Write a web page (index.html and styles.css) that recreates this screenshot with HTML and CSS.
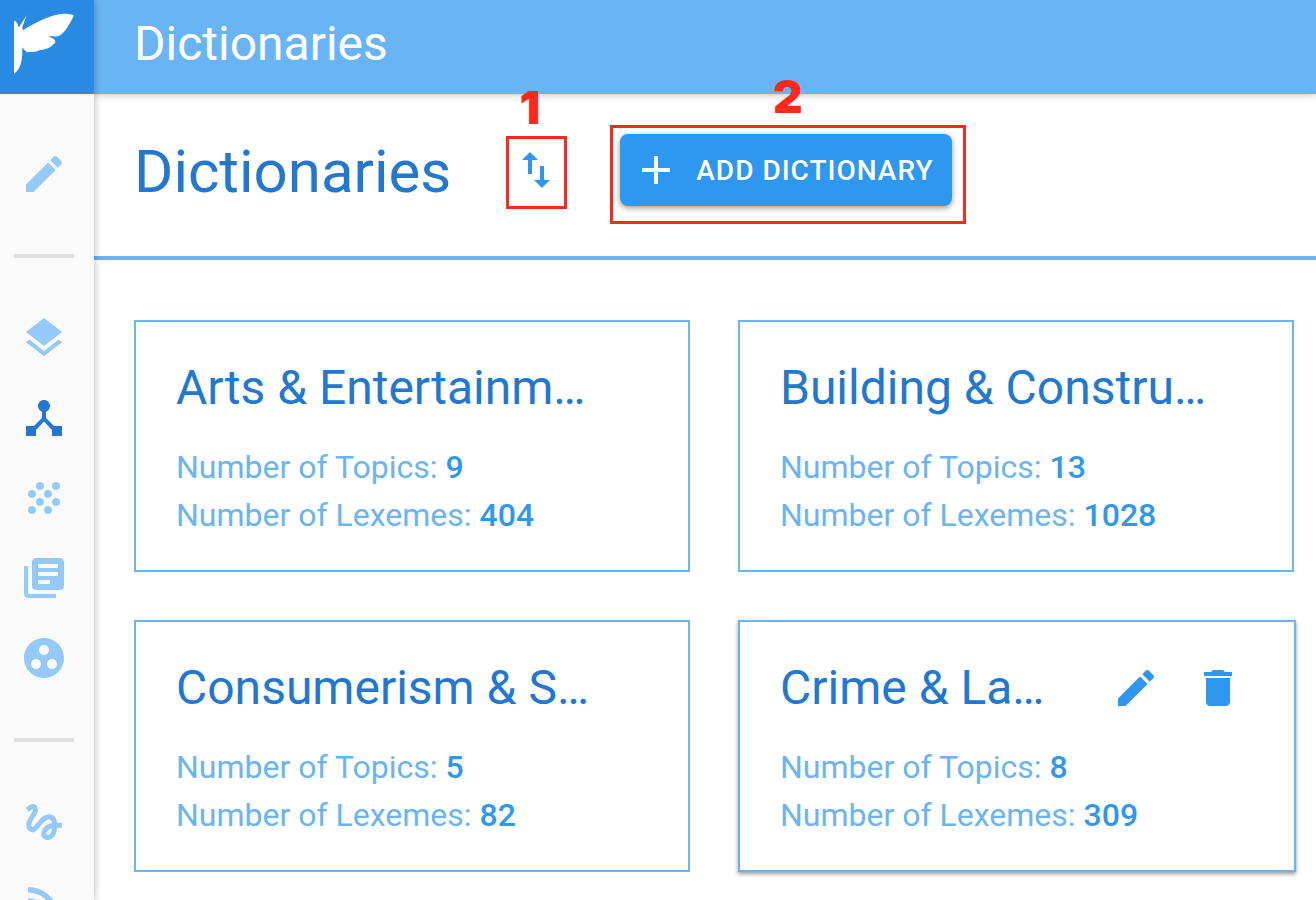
FILE: index.html
```html
<!DOCTYPE html>
<html lang="en">
<head>
    <meta charset="UTF-8">
    <title>Dictionaries</title>
    <link rel="stylesheet" href="styles.css">
</head>
<body>
    <div class="app">
        <aside class="sidebar">
            <a class="logo" href="#" aria-label="Home">
                <svg viewBox="0 0 94 94"><path d="M14 20.500C16.500 21.500 18 24 18.500 27L19.500 26.500L26.700 15L22 28L23.300 30C36 22.500 52 14 64 13.800C70 13.800 74 14.800 73.800 16C70 23 65 33 59 36C56 37 52 36 48 36.300C51 37.800 54.500 38 55.500 42C52 47 46 50 39 50.200C37.500 52 32 52 27 52.200C25 50.500 23.500 49 22.300 47.300C22.500 58 22 68 14 74Z"/></svg>
            </a>
            <nav class="menu">
                <a class="menu-item" href="#" aria-label="Edit">
                    <svg viewBox="0 0 24 24"><path d="M3 17.250V21h3.750L17.810 9.940l-3.750-3.750L3 17.250zM20.710 7.040c.39-.39.39-1.020 0-1.410l-2.340-2.340c-.39-.39-1.020-.39-1.410 0l-1.830 1.830 3.750 3.750 1.830-1.830z"/></svg>
                </a>
                <hr>
                <div class="menu-group">
                    <a class="menu-item" href="#" aria-label="Layers">
                        <svg viewBox="0 0 24 24"><path d="M11.990 18.540l-7.370-5.730L3 14.070l9 7 9-7-1.630-1.270-7.380 5.740zM12 16l7.360-5.730L21 9l-9-7-9 7 1.630 1.270L12 16z"/></svg>
                    </a>
                    <a class="menu-item active" href="#" aria-label="Dictionaries">
                        <svg viewBox="0 0 24 24"><path d="M17 16l-4-4V8.820C14.160 8.400 15 7.300 15 6c0-1.660-1.340-3-3-3S9 4.340 9 6c0 1.300.84 2.400 2 2.820V12l-4 4H3v5h5v-3.050l4-4.200 4 4.200V21h5v-5h-4z"/></svg>
                    </a>
                    <a class="menu-item" href="#" aria-label="Grain">
                        <svg viewBox="0 0 24 24"><path d="M10 12c-1.100 0-2 .9-2 2s.9 2 2 2 2-.9 2-2-.9-2-2-2zM6 8c-1.100 0-2 .9-2 2s.9 2 2 2 2-.9 2-2-.9-2-2-2zm0 8c-1.100 0-2 .9-2 2s.9 2 2 2 2-.9 2-2-.9-2-2-2zm12-8c1.100 0 2-.9 2-2s-.9-2-2-2-2 .9-2 2 .9 2 2 2zm-4 8c-1.100 0-2 .9-2 2s.9 2 2 2 2-.9 2-2-.9-2-2-2zm4-4c-1.100 0-2 .9-2 2s.9 2 2 2 2-.9 2-2-.9-2-2-2zm-4-4c-1.100 0-2 .9-2 2s.9 2 2 2 2-.9 2-2-.9-2-2-2zm-4-4c-1.100 0-2 .9-2 2s.9 2 2 2 2-.9 2-2-.9-2-2-2z"/></svg>
                    </a>
                    <a class="menu-item" href="#" aria-label="Library">
                        <svg viewBox="0 0 24 24"><path d="M4 6H2v14c0 1.100.9 2 2 2h14v-2H4V6zm16-4H8c-1.100 0-2 .9-2 2v12c0 1.100.9 2 2 2h12c1.100 0 2-.9 2-2V4c0-1.100-.9-2-2-2zm-1 9H9V9h10v2zm-4 4H9v-2h6v2zm4-8H9V5h10v2z"/></svg>
                    </a>
                    <a class="menu-item" href="#" aria-label="Groups">
                        <svg viewBox="0 0 24 24"><path d="M12 2C6.480 2 2 6.480 2 12s4.480 10 10 10 10-4.480 10-10S17.520 2 12 2zM8 17.500c-1.380 0-2.500-1.120-2.500-2.500s1.120-2.500 2.500-2.500 2.500 1.120 2.500 2.500-1.120 2.500-2.500 2.500zM9.500 8c0-1.380 1.120-2.500 2.500-2.500s2.500 1.120 2.500 2.500-1.120 2.500-2.500 2.500S9.500 9.380 9.500 8zm6.500 9.500c-1.380 0-2.500-1.120-2.500-2.500s1.120-2.500 2.500-2.500 2.500 1.120 2.500 2.500-1.120 2.500-2.500 2.500z"/></svg>
                    </a>
                </div>
                <hr>
                <div class="menu-group">
                    <a class="menu-item" href="#" aria-label="Gesture">
                        <svg viewBox="0 0 24 24"><path d="M4.590 6.890c.7-.71 1.400-1.350 1.710-1.220.5.200 0 1.030-.3 1.520-.25.420-2.860 3.890-2.860 6.310 0 1.280.48 2.340 1.340 2.980.75.560 1.740.73 2.640.46 1.070-.31 1.950-1.400 3.060-2.770 1.210-1.490 2.830-3.440 4.080-3.440 1.630 0 1.650 1.010 1.760 1.790-3.780.64-5.380 3.670-5.380 5.370 0 1.700 1.440 3.090 3.210 3.090 1.630 0 4.290-1.330 4.690-6.100H21v-2.500h-2.470c-.15-1.650-1.090-4.200-4.030-4.200-2.250 0-4.180 1.910-4.940 2.840-.58.730-2.060 2.480-2.290 2.720-.25.300-.68.840-1.110.84-.45 0-.72-.83-.36-1.920.35-1.090 1.400-2.860 1.850-3.520.78-1.140 1.300-1.920 1.300-3.280C8.950 3.690 7.310 3 6.440 3 5.120 3 3.970 4 3.720 4.250c-.36.36-.66.66-.88.93l1.750 1.710zm9.290 11.660c-.31 0-.74-.26-.74-.72 0-.6.730-2.200 2.870-2.760-.3 2.690-1.430 3.480-2.130 3.480z"/></svg>
                    </a>
                    <a class="menu-item" href="#" aria-label="Feed">
                        <svg viewBox="0 0 24 24"><circle cx="6.180" cy="17.820" r="2.180"/><path d="M4 4.440v2.830c7.030 0 12.730 5.700 12.730 12.730h2.830c0-8.590-6.970-15.560-15.560-15.560zm0 5.660v2.830c3.900 0 7.070 3.170 7.070 7.070h2.830c0-5.470-4.430-9.900-9.900-9.900z"/></svg>
                    </a>
                </div>
            </nav>
        </aside>

        <div class="page">
            <header class="topbar">Dictionaries</header>
            <main>
                <div class="toolbar">
                    <h1>Dictionaries</h1>
                    <div class="marked">
                        <button class="icon-button sort" type="button" aria-label="Sort">
                            <svg viewBox="0 0 24 24"><path d="M9 3L5 6.990h3V14h2V6.990h3L9 3zm7 14.010V10h-2v7.010h-3L15 21l4-3.990h-3z"/></svg>
                        </button>
                        <div class="mark mark-sort"><span>1</span></div>
                    </div>
                    <div class="marked">
                        <button class="add-button" type="button">
                            <svg viewBox="0 0 24 24"><path d="M19 13h-6v6h-2v-6H5v-2h6V5h2v6h6v2z"/></svg>
                            ADD DICTIONARY
                        </button>
                        <div class="mark mark-add"><span>2</span></div>
                    </div>
                </div>

                <div class="cards">
                    <section class="card">
                        <div class="card-head"><h2>Arts &amp; Entertainm…</h2></div>
                        <p>Number of Topics: <b>9</b></p>
                        <p>Number of Lexemes: <b>404</b></p>
                    </section>
                    <section class="card">
                        <div class="card-head"><h2>Building &amp; Constru…</h2></div>
                        <p>Number of Topics: <b>13</b></p>
                        <p>Number of Lexemes: <b>1028</b></p>
                    </section>
                    <section class="card">
                        <div class="card-head"><h2>Consumerism &amp; S…</h2></div>
                        <p>Number of Topics: <b>5</b></p>
                        <p>Number of Lexemes: <b>82</b></p>
                    </section>
                    <section class="card raised">
                        <div class="card-head">
                            <h2>Crime &amp; La…</h2>
                            <div class="card-actions">
                                <button class="icon-button" type="button" aria-label="Edit dictionary">
                                    <svg viewBox="0 0 24 24"><path d="M3 17.250V21h3.750L17.810 9.940l-3.750-3.750L3 17.250zM20.710 7.040c.39-.39.39-1.020 0-1.410l-2.340-2.340c-.39-.39-1.020-.39-1.410 0l-1.830 1.830 3.750 3.750 1.830-1.830z"/></svg>
                                </button>
                                <button class="icon-button" type="button" aria-label="Delete dictionary">
                                    <svg viewBox="0 0 24 24"><path d="M6 19c0 1.100.9 2 2 2h8c1.100 0 2-.9 2-2V7H6v12zM19 4h-3.500l-1-1h-5l-1 1H5v2h14V4z"/></svg>
                                </button>
                            </div>
                        </div>
                        <p>Number of Topics: <b>8</b></p>
                        <p>Number of Lexemes: <b>309</b></p>
                    </section>
                </div>
            </main>
        </div>
    </div>
</body>
</html>
```
FILE: styles.css
```css
* {
    box-sizing: border-box;
}
body {
    margin: 0;
    background-color: #ffffff;
    font-family: Roboto, sans-serif;
}
h1, h2, p {
    margin: 0;
    font-weight: 400;
}
svg {
    display: block;
    fill: currentColor;
}
button {
    border: 0;
    padding: 0;
    background: none;
    font-family: inherit;
    cursor: pointer;
}

.app {
    display: flex;
    height: 100vh;
    overflow: hidden;
}

/* sidebar */
.sidebar {
    position: relative;
    z-index: 2;
    flex: none;
    width: 94px;
    background-color: #fafafa;
    box-shadow: 0 0 8px rgba(0, 0, 0, 0.3);
}
.logo {
    display: block;
    height: 94px;
    background-color: #288ae2;
    color: #ffffff;
}
.menu {
    display: flex;
    flex-direction: column;
    align-items: center;
    gap: 56px;
    width: 88px;
    padding-top: 56px;
}
.menu-group {
    display: flex;
    flex-direction: column;
    gap: 32px;
}
.menu-item {
    width: 48px;
    height: 48px;
    color: #93caf9;
}
.menu-item.active {
    color: #2277d0;
}
.menu hr {
    width: 60px;
    height: 4px;
    margin: 0;
    border: 0;
    background-color: #e0e0e0;
}

/* page */
.page {
    flex: 1;
    min-width: 0;
}
.topbar {
    position: relative;
    z-index: 1;
    height: 94px;
    padding-left: 40px;
    background-color: #69b4f4;
    box-shadow: 0 0 8px rgba(0, 0, 0, 0.3);
    color: #ffffff;
    font-size: 48px;
    line-height: 88px;
}
.toolbar {
    display: flex;
    align-items: flex-start;
    height: 166px;
    padding: 40px;
    border-bottom: 4px solid #69b4f4;
}
.toolbar h1 {
    margin-right: 61px;
    color: #2277d0;
    font-size: 60px;
    line-height: 76px;
}
.icon-button {
    display: block;
    width: 48px;
    height: 48px;
    color: #2e97f0;
}
.sort {
    height: 72px;
    margin-right: 60px;
}
.add-button {
    display: flex;
    align-items: center;
    gap: 16px;
    height: 72px;
    padding: 0 18px 0 12px;
    border-radius: 8px;
    background-color: #2e97f0;
    box-shadow: 0 2px 6px rgba(0, 0, 0, 0.4);
    color: #ffffff;
    font-size: 28px;
    font-weight: 500;
    letter-spacing: 1px;
}
.add-button svg {
    width: 48px;
}

/* numbered red frames over the buttons */
.marked {
    position: relative;
}
.mark {
    position: absolute;
    z-index: 3;
    border: 3px solid #fd291c;
    color: #fd291c;
    font-family: Inter, sans-serif;
    font-size: 46px;
    font-weight: 900;
    line-height: 48px;
    text-align: center;
    pointer-events: none;
}
.mark span {
    position: absolute;
    right: 0;
    bottom: 100%;
    left: 0;
    padding-bottom: 8px;
}
.mark-sort {
    top: 2px;
    left: -6px;
    width: 61px;
    height: 73px;
}
.mark-sort span {
    right: 14px;
}
.mark-add {
    top: -9px;
    right: -14px;
    bottom: -18px;
    left: -10px;
}

/* cards */
.cards {
    display: grid;
    grid-template-columns: 1fr 1fr;
    gap: 48px;
    padding: 60px 22px 48px 40px;
}
.card {
    min-width: 0;
    padding: 34px 40px 31px;
    border: 2px solid #69b4f4;
    color: #69b4f4;
    font-size: 32px;
    line-height: 48px;
}
.card.raised {
    margin-right: -2px;
    box-shadow: 0 2px 4px rgba(0, 0, 0, 0.4);
}
.card-head {
    display: flex;
    align-items: center;
    justify-content: space-between;
    margin-bottom: 23px;
}
.card h2 {
    overflow: hidden;
    color: #2277d0;
    font-size: 48px;
    line-height: 64px;
    text-overflow: ellipsis;
    white-space: nowrap;
}
.card b {
    color: #2e97f0;
    font-weight: 500;
}
.card-actions {
    display: flex;
    gap: 34px;
    margin-right: 12px;
}
```
